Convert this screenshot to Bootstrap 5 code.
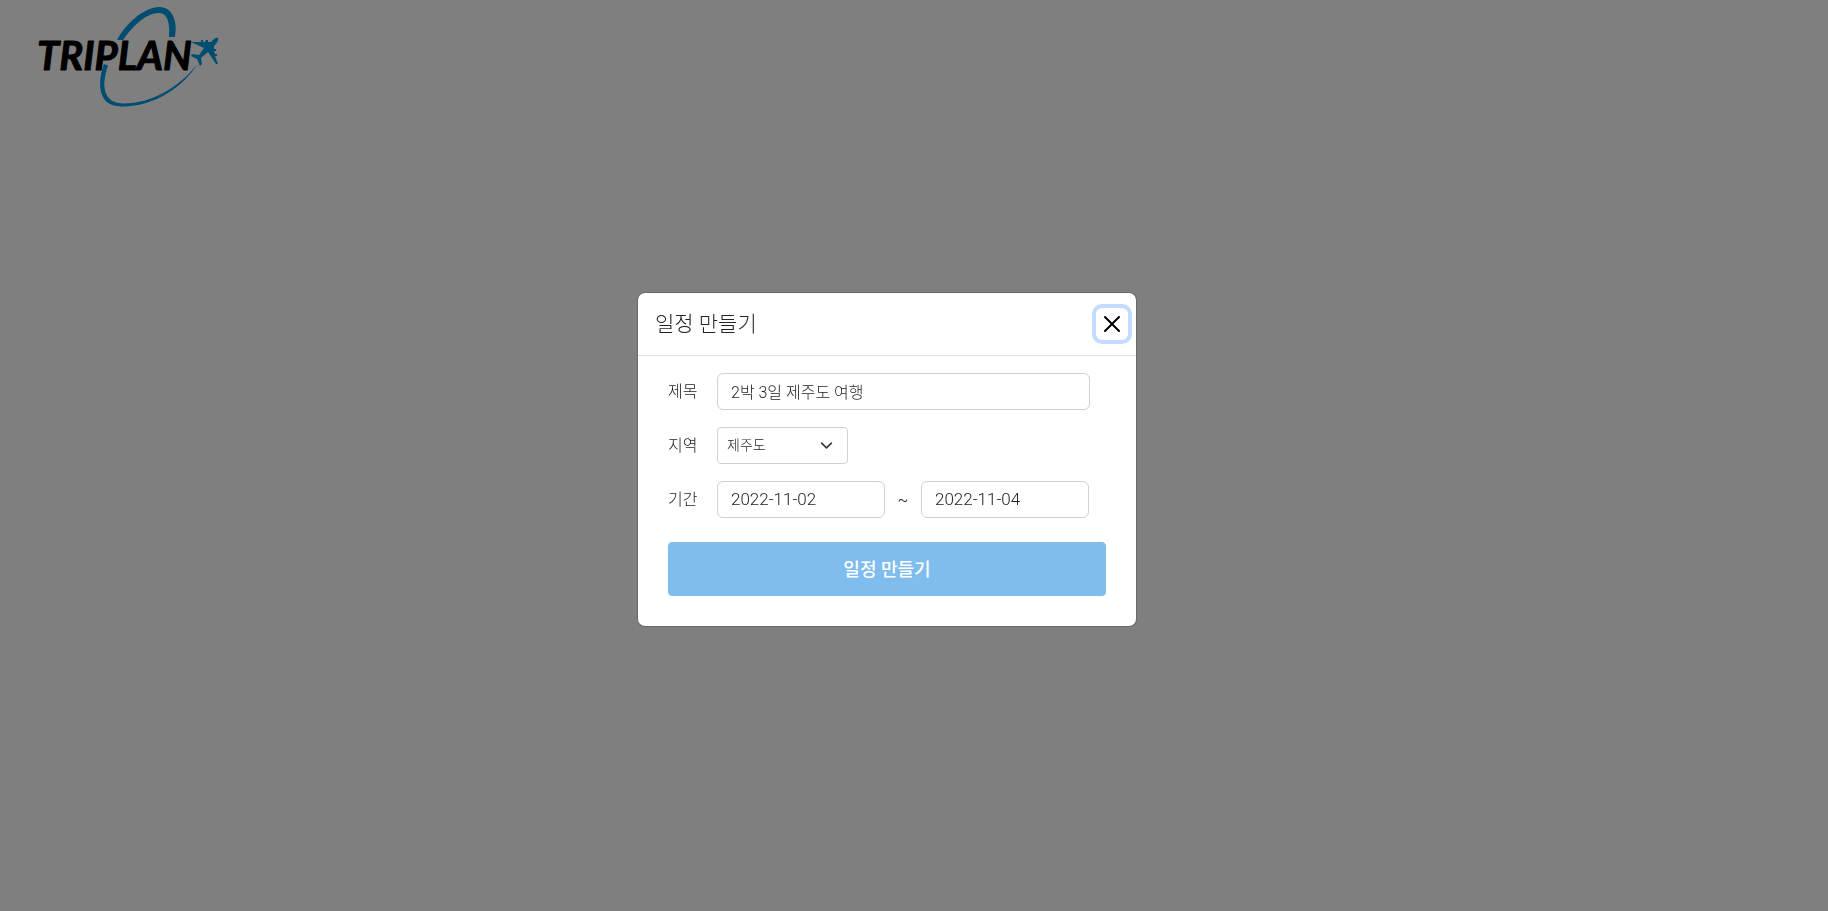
<!DOCTYPE html>
<html lang="ko">
<head>
<meta charset="utf-8">
<meta name="viewport" content="width=device-width, initial-scale=1">
<title>TRIPLAN</title>
<link href="https://cdn.jsdelivr.net/npm/bootstrap@5.3.0/dist/css/bootstrap.min.css" rel="stylesheet">
<style>
  body { font-family: Roboto, "Noto Sans CJK KR", sans-serif; font-weight: 300; }
  .brand-logo { width: 220px; height: 120px; }
  .brand-logo text { font: italic bold 40px Lato, "Liberation Sans", sans-serif; stroke: #000; stroke-width: 1; stroke-linejoin: round; }
  .plan-modal { padding: 8px 54px 0 0; color: #212529; }
  .plan-modal .modal-header { padding-left: 17px; }
  .plan-modal .modal-title { font-size: 21px; line-height: 30px; font-weight: 300; }
  .plan-modal .btn-close { opacity: 1; box-shadow: 0 0 0 4px #c2dbfe; }
  .plan-modal .modal-body { padding: 17px 30px 30px; }
  .plan-form { gap: 17px; }
  .field-label { width: 49px; flex: none; }
  .plan-modal .form-control { height: 37px; padding: 4px 13px 6px; color: #212529; font-weight: 300; border-color: #ced0da; }
  .plan-modal .form-select { width: 131px; height: 37px; padding: 5px 32px 5px 9px; font-size: 14px; font-weight: 300; color: #212529; border-color: #ced0da; border-radius: 4px; background-size: 13px; background-position: right 14px center; }
  .title-input { max-width: 373px; }
  .plan-modal .date-input { width: 168px; font-size: 17px; }
  .date-tilde { width: 36px; }
  .btn-create { margin-top: 7px; height: 54px; border-radius: 4px; font-size: 18px; font-weight: 500; --bs-btn-color: #fff; --bs-btn-bg: #80bdef; --bs-btn-border-color: #80bdef; --bs-btn-hover-color: #fff; --bs-btn-hover-bg: #6aafe8; }
</style>
</head>
<body>
<header class="px-3 ms-1">
  <a href="#" aria-label="TRIPLAN">
    <svg class="brand-logo d-block" viewBox="20 0 220 120">
      <g fill="#009be0">
        <path d="M117 40C125 25 143 7 160 7c12 0 18 14 15 30h-6c1-13-1-24-10-24-13 0-26 13-36 27z"/>
        <path d="M104 64C98 80 96 106 121 106.500c32 1 63-20 76-42-18 23-46 39-73 39-21 0-23-18-16-38z"/>
        <path d="M191 42l10 0 0-2 2 0 0 2 2 0 1-2 2 0 0 2 3 0c3-3 5-5 7-4 1 2-1 5-4 8l0 3 2 0 0 2-2 0 1 3 2 0 0 2-2 0 3 8-2 0-8-12-7 6 1 6-2 2-3-7-6-3 1-2 7 1 5-7z"/>
      </g>
      <text x="37" y="70">TRIPLAN</text>
    </svg>
  </a>
</header>

<div class="modal-backdrop show"></div>
<div class="modal show d-block plan-modal" tabindex="-1" role="dialog" aria-modal="true" aria-labelledby="planTitle">
  <div class="modal-dialog modal-dialog-centered">
    <div class="modal-content">
      <div class="modal-header">
        <h5 class="modal-title" id="planTitle">일정 만들기</h5>
        <button type="button" class="btn-close" data-bs-dismiss="modal" aria-label="닫기"></button>
      </div>
      <div class="modal-body">
        <form class="plan-form d-flex flex-column">
          <div class="d-flex align-items-center">
            <label class="field-label" for="title">제목</label>
            <input class="form-control title-input" id="title" type="text" value="2박 3일 제주도 여행">
          </div>
          <div class="d-flex align-items-center">
            <label class="field-label" for="region">지역</label>
            <select class="form-select" id="region"><option selected>제주도</option></select>
          </div>
          <div class="d-flex align-items-center">
            <label class="field-label" for="startDate">기간</label>
            <input class="form-control date-input" id="startDate" type="text" value="2022-11-02">
            <span class="date-tilde text-center">~</span>
            <input class="form-control date-input" type="text" value="2022-11-04" aria-label="종료일">
          </div>
          <button type="submit" class="btn btn-create w-100">일정 만들기</button>
        </form>
      </div>
    </div>
  </div>
</div>
<script src="https://cdn.jsdelivr.net/npm/bootstrap@5.3.0/dist/js/bootstrap.bundle.min.js"></script>
</body>
</html>
